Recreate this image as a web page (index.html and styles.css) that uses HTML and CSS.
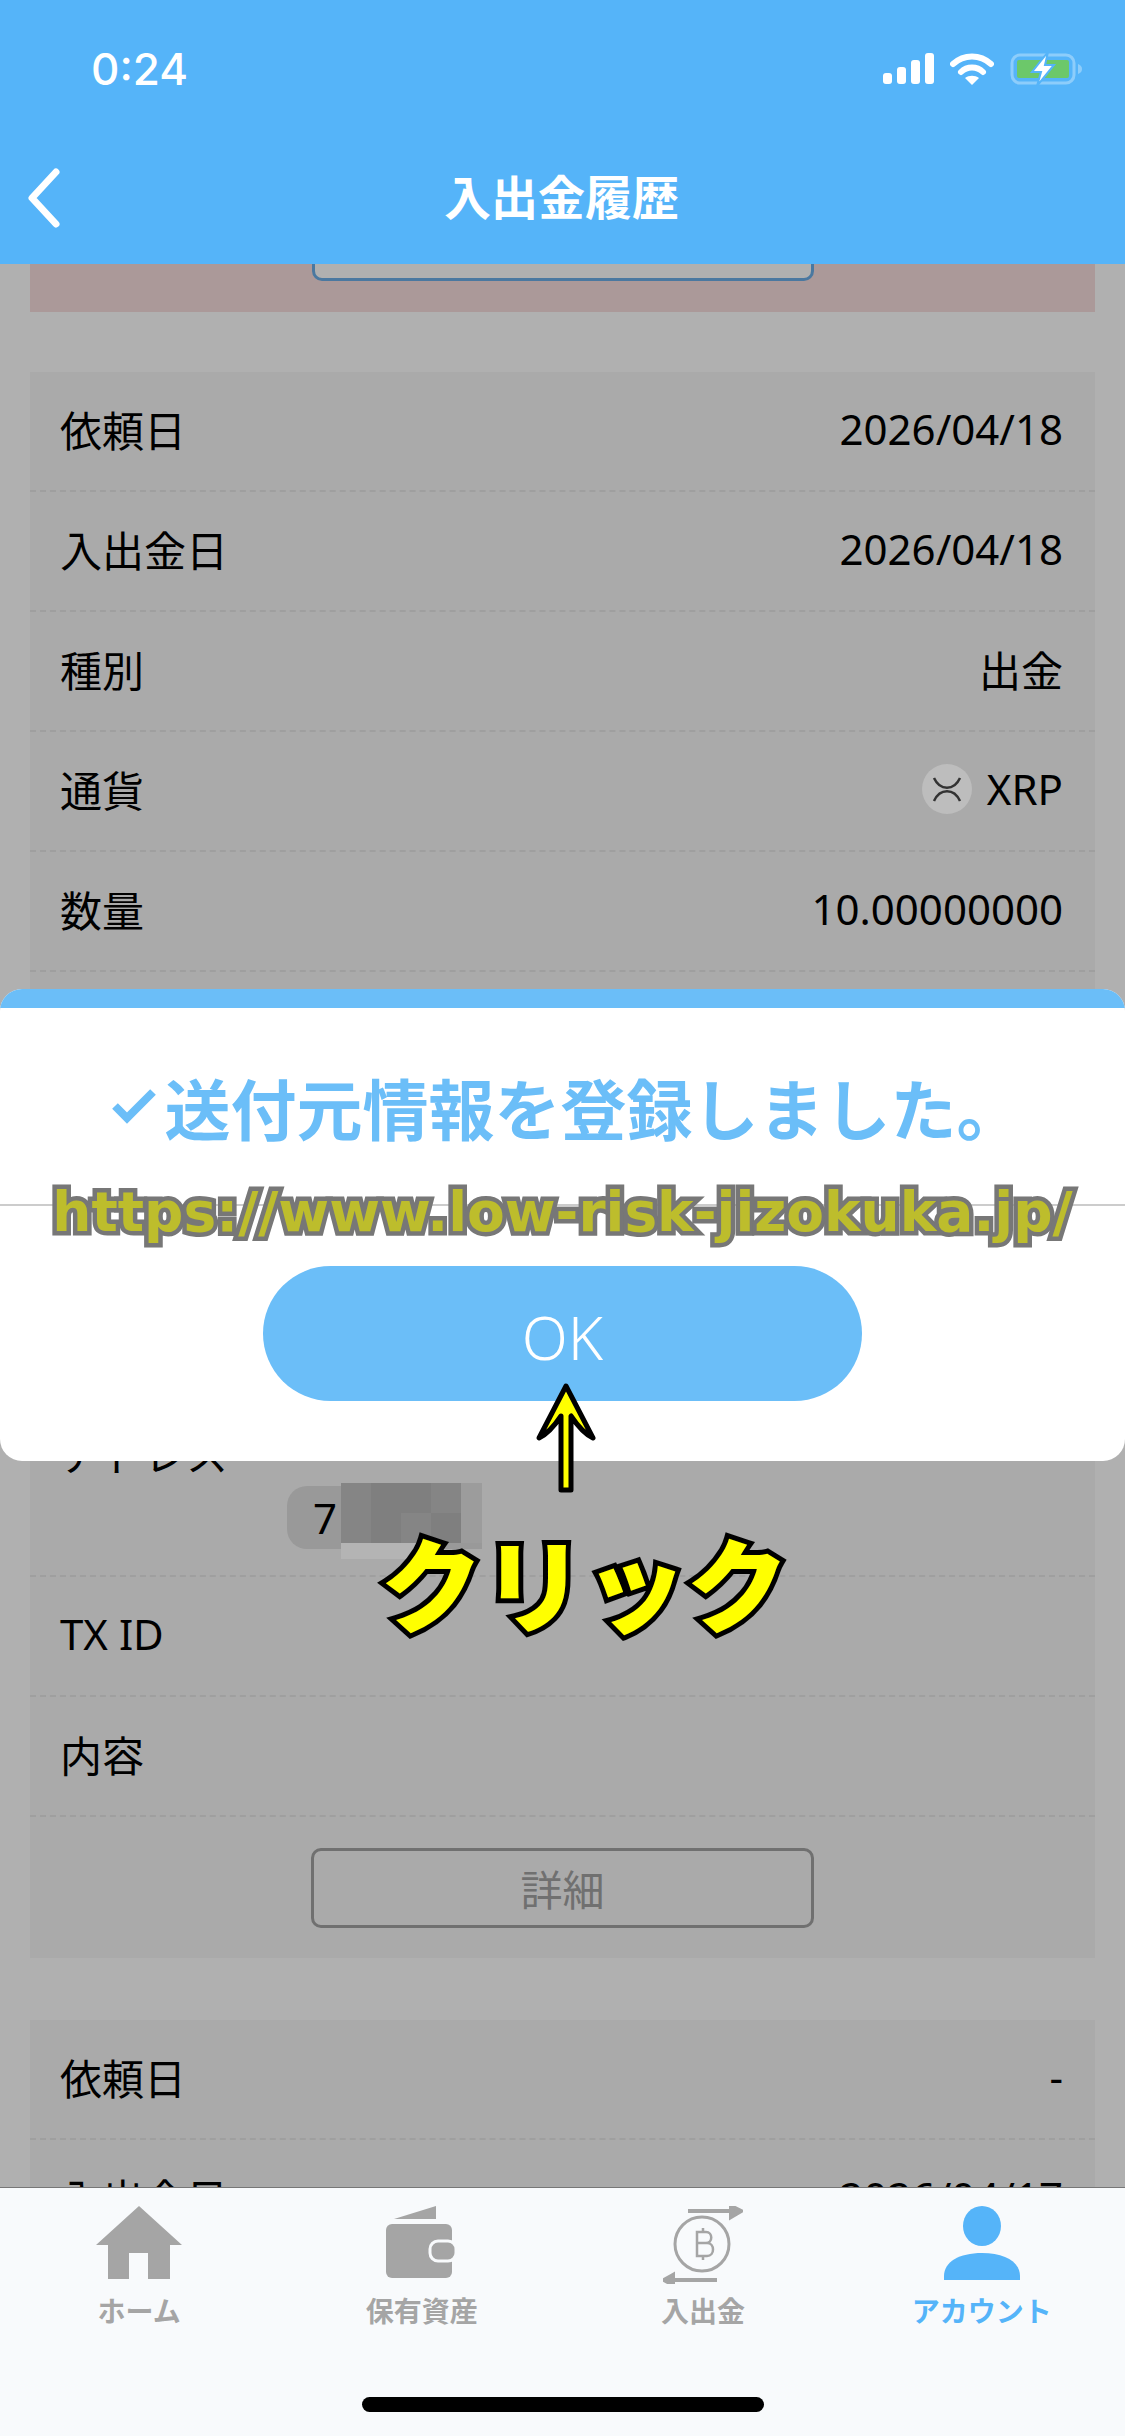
FILE: index.html
```html
<!DOCTYPE html>
<html lang="ja">
<head>
    <meta charset="UTF-8">
    <meta name="viewport" content="width=device-width, initial-scale=1.0">
    <title>入出金履歴</title>
    <link rel="stylesheet" href="styles.css">
</head>
<body>
<div class="phone">
    <header class="header">
        <div class="status-bar">
            <span class="time">0:24</span>
            <div class="status-icons">
                <svg width="51" height="31" viewBox="0 0 51 31"><rect x="0" y="20" width="9" height="11" rx="3" fill="#fff"/><rect x="14" y="14" width="9" height="17" rx="3" fill="#fff"/><rect x="28" y="7" width="9" height="24" rx="3" fill="#fff"/><rect x="42" y="0" width="9" height="31" rx="3" fill="#fff"/></svg>
                <svg width="44" height="33" viewBox="0 0 44 33"><path d="M3 12 C14 2 30 2 41 12" fill="none" stroke="#fff" stroke-width="6" stroke-linecap="round"/><path d="M11 20 C17 14 27 14 33 20" fill="none" stroke="#fff" stroke-width="6" stroke-linecap="round"/><path d="M15 26 C19 23 25 23 29 26 L22 33 Z" fill="#fff"/></svg>
                <svg width="72" height="34" viewBox="0 0 72 34"><rect x="2" y="3" width="62" height="28" rx="8" fill="none" stroke="#8dcdfb" stroke-width="3"/><rect x="7" y="8" width="52" height="18" rx="2" fill="#6cc86a"/><path d="M68 12 C71 13 72 15 72 17 C72 19 71 21 68 22 Z" fill="#8dcdfb"/><path d="M38 0 L22 20 L31 20 L27 34 L44 13 L35 13 Z" fill="#fff" stroke="#55b4f9" stroke-width="2"/></svg>
            </div>
        </div>
        <div class="nav-bar">
            <svg class="back" width="40" height="62" viewBox="0 0 40 62"><path d="M32 5 L8 31 L32 57" fill="none" stroke="#fff" stroke-width="7" stroke-linecap="round" stroke-linejoin="round"/></svg>
            <span class="nav-title">入出金履歴</span>
        </div>
    </header>

    <main class="content">
        <div class="scroll">
            <div class="notice"><div class="notice-btn"></div></div>

            <section class="card">
                <div class="row"><span>依頼日</span><span>2026/04/18</span></div>
                <div class="row"><span>入出金日</span><span>2026/04/18</span></div>
                <div class="row"><span>種別</span><span>出金</span></div>
                <div class="row">
                    <span>通貨</span>
                    <span class="currency">
                        <svg width="50" height="50" viewBox="0 0 50 50"><circle cx="25" cy="25" r="25" fill="#bdbdbd"/><path d="M12 14 C18 27 32 27 38 14 M12 37 C18 24 32 24 38 37" fill="none" stroke="#333" stroke-width="2.5"/></svg>
                        XRP
                    </span>
                </div>
                <div class="row"><span>数量</span><span>10.00000000</span></div>
                <div class="row-hidden"></div>
                <div class="row-address">
                    <span>アドレス</span>
                    <div class="chip">7</div>
                    <div class="mosaic">
                        <i class="m1"></i><i class="m2"></i><i class="m2"></i><i class="m1"></i><i class="m3"></i>
                        <i class="m1"></i><i class="m2"></i><i class="m1"></i><i class="m2"></i><i class="m3"></i>
                        <i class="m4"></i><i class="m4"></i><i class="m4"></i><i></i><i></i>
                    </div>
                </div>
                <div class="row"><span>TX ID</span></div>
                <div class="row"><span>内容</span></div>
                <div class="detail-wrap"><div class="detail-btn">詳細</div></div>
            </section>

            <section class="card">
                <div class="row"><span>依頼日</span><span>-</span></div>
                <div class="row"><span>入出金日</span><span>2026/04/17</span></div>
            </section>
        </div>
    </main>

    <nav class="tabbar">
        <div class="tabs">
            <div class="tab tab-home">
                <svg width="86" height="74" viewBox="0 0 86 74"><path d="M43 0 L86 39 L74 39 L74 73 L52 73 L52 47 L33 47 L33 73 L12 73 L12 39 L0 39 Z" fill="#a5a5a5"/></svg>
                <span>ホーム</span>
            </div>
            <div class="tab">
                <svg width="72" height="74" viewBox="0 0 72 74"><path d="M8 13 L50 0 L50 13 Z" fill="#a5a5a5"/><rect x="0" y="18" width="66" height="54" rx="6" fill="#a5a5a5"/><rect x="44" y="35" width="26" height="20" rx="8" fill="#a5a5a5" stroke="#f8fafc" stroke-width="3"/></svg>
                <span>保有資産</span>
            </div>
            <div class="tab">
                <svg width="80" height="78" viewBox="0 0 80 78"><path d="M25 5 L70 5 M68 0 L78 5 L68 11 Z" fill="#a5a5a5" stroke="#a5a5a5" stroke-width="4"/><circle cx="39" cy="38" r="27" fill="none" stroke="#a5a5a5" stroke-width="3"/><path d="M34 26 H43 C50 26 50 37 43 37 H34 Z M34 37 H44 C52 37 52 50 44 50 H34 Z M34 26 V50 M40 22 V26 M40 50 V54" fill="none" stroke="#a5a5a5" stroke-width="2.5"/><path d="M8 74 L54 74 M10 69 L1 74 L10 79 Z" fill="#a5a5a5" stroke="#a5a5a5" stroke-width="4"/></svg>
                <span>入出金</span>
            </div>
            <div class="tab tab-active">
                <svg width="76" height="74" viewBox="0 0 76 74"><ellipse cx="38" cy="20" rx="19" ry="20" fill="#55b4f9"/><path d="M0 74 L0 70 C0 56 15 47 38 47 C61 47 76 56 76 70 L76 74 Z" fill="#55b4f9"/></svg>
                <span>アカウント</span>
            </div>
        </div>
        <div class="home-bar"></div>
    </nav>

    <div class="modal">
        <div class="modal-strip"></div>
        <div class="modal-head">
            <svg width="46" height="36" viewBox="0 0 46 36"><path d="M4 18 L16 30 L42 4" fill="none" stroke="#6bbef8" stroke-width="8"/></svg>
            <span>送付元情報を登録しました。</span>
        </div>
        <div class="modal-foot"><div class="ok-btn">OK</div></div>
    </div>

    <!-- 注釈 -->
    <div class="note-url">https://www.low-risk-jizokuka.jp/</div>
    <svg class="note-arrow" width="64" height="112" viewBox="0 0 64 112"><path d="M32 4 L59 56 C51 52 45 46 37 34 L37 108 L27 108 L27 34 C19 46 13 52 5 56 Z" fill="#ffff00" stroke="#000" stroke-width="5" stroke-linejoin="round"/></svg>
    <div class="note-click">クリック</div>
</div>
</body>
</html>
```

FILE: styles.css
```css
body {
    margin: 0;
    font-family: "Noto Sans", "Noto Sans CJK JP", sans-serif;
    color: #000;
}
.phone {
    position: relative;
    width: 1125px;
    height: 2436px;
    display: flex;
    flex-direction: column;
    overflow: hidden;
    background-color: #b0b0b0;
}

/* ヘッダー */
.header {
    height: 264px;
    flex-shrink: 0;
    background-color: #55b4f9;
    color: #fff;
}
.status-bar {
    display: flex;
    justify-content: space-between;
    align-items: center;
    height: 33px;
    padding: 52px 43px 0 91px;
}
.time {
    font-family: Inter, sans-serif;
    font-size: 44px;
    font-weight: 500;
}
.status-icons {
    display: flex;
    align-items: center;
    gap: 16px;
}
.nav-bar {
    position: relative;
    display: flex;
    justify-content: center;
    align-items: center;
    height: 60px;
    margin-top: 83px;
}
.back {
    position: absolute;
    left: 24px;
    top: -1px;
}
.nav-title {
    font-size: 47px;
    font-weight: 700;
    margin: -8px 2px 0 0;
}

/* 本文 */
.content {
    flex: 1;
    overflow: hidden;
}
.scroll {
    margin-top: -60px;
    padding: 0 30px;
}
.notice {
    height: 108px;
    background-color: #ab9999;
}
.notice-btn {
    box-sizing: border-box;
    width: 502px;
    height: 77px;
    margin: 0 auto;
    border: 3px solid #4a78a0;
    border-radius: 10px;
    background-color: #b0b0b0;
}
.card {
    margin-top: 60px;
    background-color: #aaaaaa;
}
.card + .card {
    margin-top: 62px;
}
.row {
    box-sizing: border-box;
    height: 120px;
    padding: 0 32px 5px 30px;
    display: flex;
    justify-content: space-between;
    align-items: center;
    border-bottom: 2px dashed #9f9f9f;
    font-size: 42px;
}
.currency {
    display: flex;
    align-items: center;
    gap: 15px;
}
.row-hidden {
    height: 420px;
}
.row-address {
    position: relative;
    box-sizing: border-box;
    height: 185px;
    padding: 30px 30px 0;
    border-bottom: 2px dashed #9f9f9f;
    font-size: 42px;
}
.chip {
    box-sizing: border-box;
    width: 195px;
    height: 63px;
    margin: 3px 0 0 227px;
    padding-left: 26px;
    border-radius: 20px 0 0 20px;
    background-color: #999999;
    line-height: 63px;
}
.mosaic {
    position: absolute;
    left: 311px;
    top: 91px;
    display: grid;
    grid-template-columns: 30px 30px 30px 30px 21px;
    grid-template-rows: 30px 30px 16px;
}
.m1 { background-color: #858585; }
.m2 { background-color: #7f7f7f; }
.m3 { background-color: #9c9c9c; }
.m4 { background-color: #b4b4b4; }
.detail-wrap {
    height: 141px;
    padding-top: 31px;
    box-sizing: border-box;
}
.detail-btn {
    box-sizing: border-box;
    width: 503px;
    height: 80px;
    margin: 0 auto;
    border: 3px solid #707070;
    border-radius: 10px;
    text-align: center;
    line-height: 78px;
    font-size: 42px;
    color: #707070;
}

/* タブバー */
.tabbar {
    position: relative;
    z-index: 1;
    box-sizing: border-box;
    height: 249px;
    flex-shrink: 0;
    border-top: 1px solid #777777;
    background-color: #f8fafc;
}
.tabs {
    display: grid;
    grid-template-columns: repeat(4, 1fr);
    padding-top: 18px;
}
.tab {
    display: flex;
    flex-direction: column;
    align-items: center;
    height: 124px;
    justify-content: space-between;
    font-size: 28px;
    font-weight: 700;
    color: #a5a5a5;
}
.tab-home {
    padding-right: 3px;
}
.tab-active {
    padding-right: 5px;
    color: #55b4f9;
}
.home-bar {
    width: 402px;
    height: 15px;
    margin: 67px auto 0;
    border-radius: 8px;
    background-color: #000;
}

/* モーダル */
.modal {
    position: absolute;
    left: 0;
    right: 0;
    top: 989px;
    z-index: 2;
    overflow: hidden;
    border-radius: 22px;
    background-color: #fff;
}
.modal-strip {
    height: 19px;
    background-color: #6bbef8;
}
.modal-head {
    display: flex;
    justify-content: center;
    align-items: center;
    gap: 8px;
    height: 196px;
    padding-left: 8px;
    border-bottom: 2px solid #cccccc;
    font-size: 66px;
    font-weight: 700;
    color: #6bbef8;
}
.modal-foot {
    padding: 60px 0;
}
.ok-btn {
    width: 599px;
    height: 135px;
    margin: 0 auto;
    border-radius: 68px;
    background-color: #6bbef8;
    color: #fff;
    text-align: center;
    line-height: 142px;
    font-size: 60px;
    font-weight: 300;
}

/* 注釈 */
.note-url {
    position: absolute;
    left: 0;
    right: 0;
    top: 1182px;
    z-index: 3;
    text-align: center;
    font-family: "DejaVu Sans", sans-serif;
    font-size: 55px;
    line-height: 60px;
    font-weight: 700;
    color: #bdbd2c;
    -webkit-text-stroke: 9px #777777;
    paint-order: stroke fill;
}
.note-arrow {
    position: absolute;
    left: 534px;
    top: 1382px;
    z-index: 3;
}
.note-click {
    position: absolute;
    left: 0;
    right: 0;
    top: 1506px;
    padding-left: 44px;
    z-index: 3;
    text-align: center;
    font-family: "Noto Sans CJK JP", sans-serif;
    font-size: 102px;
    line-height: 150px;
    font-weight: 900;
    color: #ffff00;
    -webkit-text-stroke: 10px #000;
    paint-order: stroke fill;
}
```
